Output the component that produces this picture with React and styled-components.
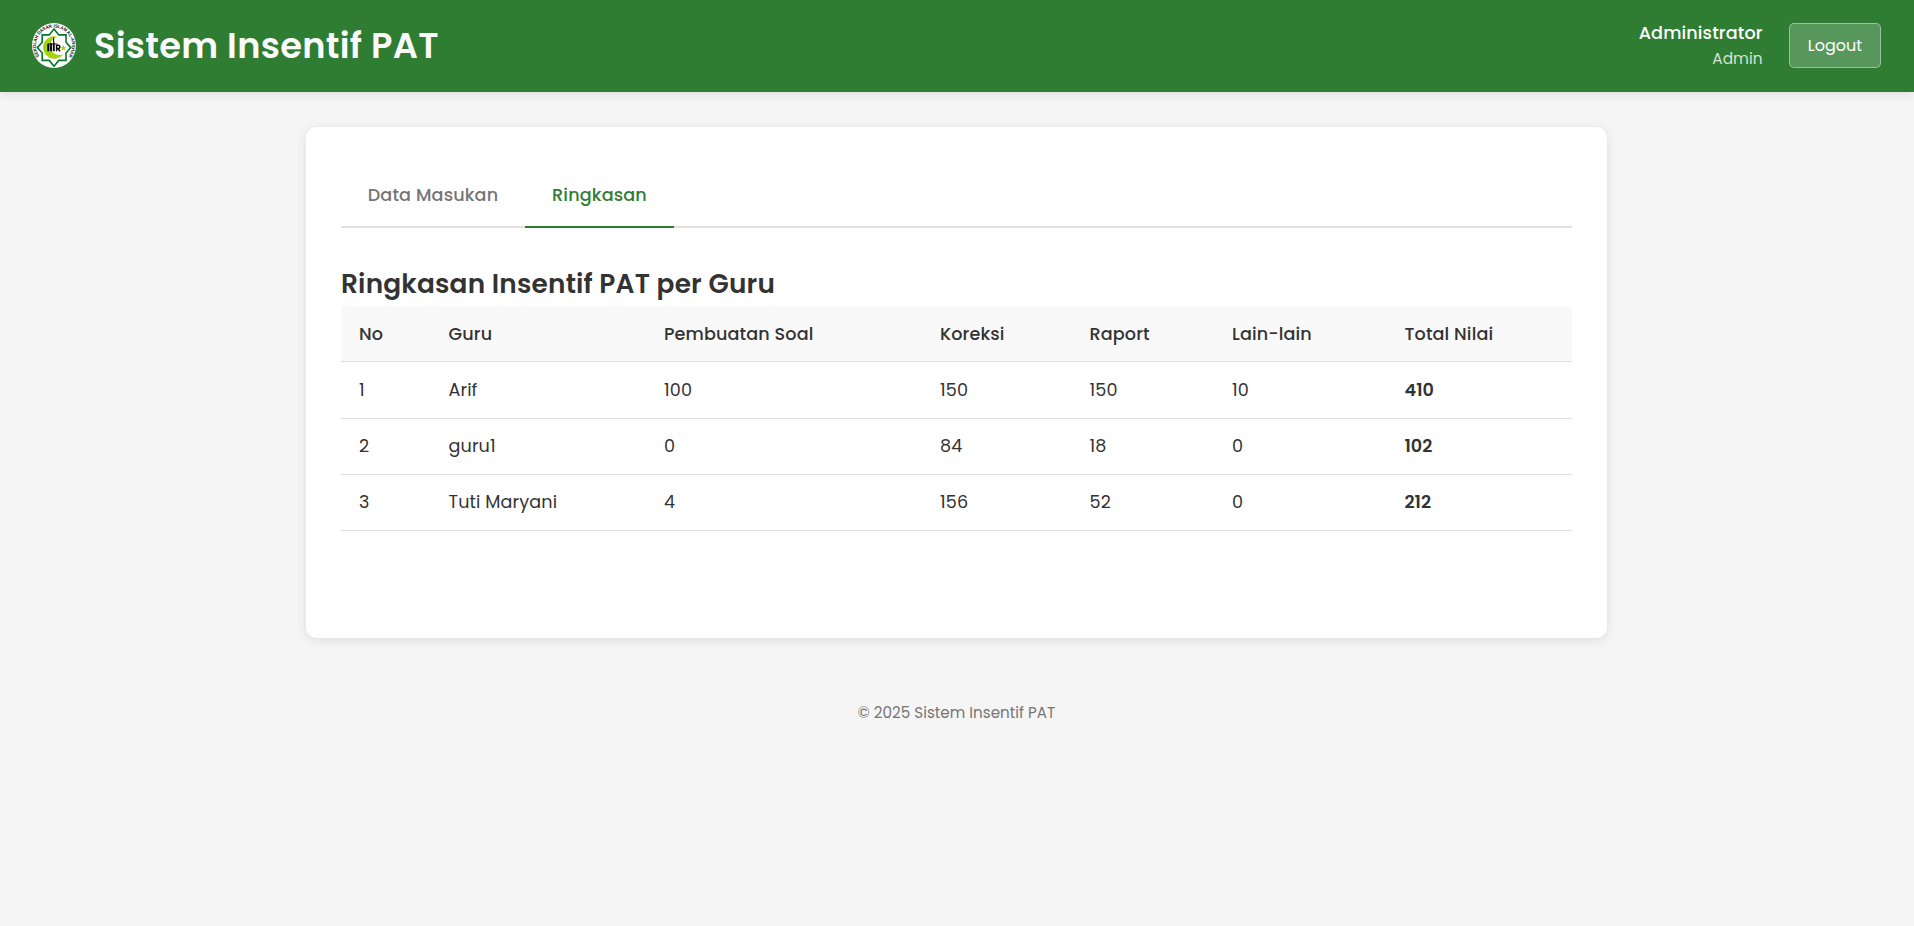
import React from 'react';
import styled, { createGlobalStyle } from 'styled-components';

const GlobalStyle = createGlobalStyle`
  *, *::before, *::after { box-sizing: border-box; }
  body {
    margin: 0;
    min-height: 100vh;
    background: #f5f5f5;
    color: #333;
    font-family: Poppins, Inter, "Liberation Sans", sans-serif;
    font-size: 17.6px;
    line-height: 28px;
    letter-spacing: 0.12px;
  }
`;

const Header = styled.header`
  display: flex;
  align-items: center;
  justify-content: space-between;
  height: 92px;
  padding: 0 33px 1px 32px;
  background: #2e7d32;
  color: #fff;
  box-shadow: 0 2px 9px rgba(0, 0, 0, 0.1);
`;

const Brand = styled.div`
  display: flex;
  align-items: center;
  gap: 18px;
`;

const Logo = styled.svg`
  display: block;
  width: 44px;
  height: 45px;
  overflow: visible;
`;

const Title = styled.h1`
  margin: 0;
  font-size: 35.2px;
  font-weight: 600;
  line-height: 47px;
  letter-spacing: 0.3px;
  color: #fafafa;
`;

const Account = styled.div`
  display: flex;
  align-items: center;
  gap: 26.4px;
`;

const Identity = styled.div`
  display: flex;
  flex-direction: column;
  align-items: flex-end;
`;

const UserName = styled.span`
  font-weight: 500;
  line-height: 28px;
`;

const Role = styled.span`
  font-size: 15.4px;
  line-height: 24px;
  letter-spacing: 0;
  padding-bottom: 1px;
  opacity: 0.8;
`;

const LogoutButton = styled.button`
  width: 92px;
  height: 45px;
  padding: 0;
  border: 1px solid rgba(255, 255, 255, 0.4);
  border-radius: 5px;
  background: rgba(255, 255, 255, 0.2);
  color: #fff;
  font: 400 16px Poppins, Inter, sans-serif;
`;

const Card = styled.main`
  width: 1301px;
  height: 511px;
  margin: 35px 0 0 306px;
  padding: 35px;
  border-radius: 11px;
  background: #fff;
  box-shadow: 0 2px 11px rgba(0, 0, 0, 0.1);
`;

const Tabs = styled.nav`
  display: flex;
  height: 66px;
  border-bottom: 2px solid #e0e0e0;
`;

const Tab = styled.button`
  width: ${({ $width }) => $width}px;
  height: 66px;
  padding: 1px 0 0;
  border: 0;
  border-bottom: 2px solid ${({ $active }) => ($active ? '#2e7d32' : 'transparent')};
  background: none;
  color: ${({ $active }) => ($active ? '#2e7d32' : '#757575')};
  font: 500 17.6px Poppins, Inter, sans-serif;
  letter-spacing: 0.14px;
`;

const SectionTitle = styled.h2`
  margin: 35px 0 0;
  height: 43px;
  font-size: 26.4px;
  font-weight: 600;
  line-height: 42px;
  letter-spacing: 0.19px;
`;

const Table = styled.table`
  width: 1231px;
  table-layout: fixed;
  border-collapse: separate;
  border-spacing: 0;
`;

const Column = styled.col`
  width: ${({ $width }) => $width}px;
`;

const HeadCell = styled.th`
  height: 56px;
  padding: 0 0 0 18px;
  border-bottom: 1px solid #e0e0e0;
  background: #f9f9f9;
  font-weight: 500;
  text-align: left;
`;

const Cell = styled.td`
  height: ${({ $tall }) => ($tall ? 57 : 56)}px;
  padding: 0 0 ${({ $tall }) => ($tall ? 0 : 1)}px 18px;
  border-bottom: 1px solid #e0e0e0;
  font-weight: ${({ $strong }) => ($strong ? 600 : 400)};
  letter-spacing: ${({ $strong }) => ($strong ? 0 : 0.12)}px;
`;

const Footer = styled.footer`
  margin-top: 63px;
  padding-right: 1px;
  font-size: 15.1px;
  line-height: 24px;
  letter-spacing: 0.03px;
  color: #757575;
  text-align: center;
`;

const columns = [
  { label: 'No', width: 89.5 },
  { label: 'Guru', width: 215.5 },
  { label: 'Pembuatan Soal', width: 276 },
  { label: 'Koreksi', width: 149.5 },
  { label: 'Raport', width: 142.5 },
  { label: 'Lain-lain', width: 172.5 },
  { label: 'Total Nilai', width: 185.5 },
];

const rows = [
  { guru: 'Arif', values: [100, 150, 150, 10], total: 410 },
  { guru: 'guru1', values: [0, 84, 18, 0], total: 102 },
  { guru: 'Tuti Maryani', values: [4, 156, 52, 0], total: 212 },
];

function SchoolLogo() {
  return (
    <Logo viewBox="0 0 44 45" aria-label="Sekolah Dasar Islam Al-Anshar">
      <defs>
        <path id="ring" d="M7.8 33.6 A18 18 0 1 1 36.2 33.6" />
      </defs>
      <ellipse cx="22" cy="22.5" rx="22" ry="22.5" fill="#fff" />
      <text
        fontFamily="Liberation Sans, sans-serif"
        fontWeight="700"
        fontSize="4.6"
        letterSpacing="0"
        fill="#111"
      >
        <textPath href="#ring" startOffset="0.5" textLength="79" lengthAdjust="spacingAndGlyphs">
          SEKOLAH DASAR ISLAM AL-ANSHAR
        </textPath>
      </text>
      <path
        d="M22 6 L26.8 11.9 L34 11.9 L34 19.2 L38.8 24.6 L34 30 L34 37.4 L26.8 37.4 L22 43.2 L17.2 37.4 L10.2 37.4 L10.2 30 L5.4 24.6 L10.2 19.2 L10.2 11.9 L17.2 11.9 Z"
        fill="#fff"
        stroke="#08752c"
        strokeWidth="1.6"
      />
      <path
        d="M26 13.8 A11.3 11.3 0 1 0 31.4 31.2 A9.2 9.2 0 1 1 26 13.8 Z"
        fill="#a4d30c"
      />
      <path d="M31.3 21.8l.9 2.1 2.2.1-1.7 1.5.6 2.3-2-1.3-1.9 1.3.6-2.3-1.7-1.5 2.2-.1z" fill="#a4d30c" />
      <g fill="none" stroke="#080808">
        <path d="M21.6 14.5v5" strokeWidth="1.1" />
        <path d="M16 21h9.5" strokeWidth="0.8" />
        <path d="M16.2 20.7v7.6M19 20v8.3M21.8 19.5v8.8" strokeWidth="1.9" />
        <path d="M24.6 28.3v-6h1.6a1.6 1.6 0 0 1 0 3.3h-1.6M26 25.6l2 2.7" strokeWidth="1.5" />
      </g>
    </Logo>
  );
}

export default function App() {
  return (
    <>
      <GlobalStyle />
      <Header>
        <Brand>
          <SchoolLogo />
          <Title>Sistem Insentif PAT</Title>
        </Brand>
        <Account>
          <Identity>
            <UserName>Administrator</UserName>
            <Role>Admin</Role>
          </Identity>
          <LogoutButton>Logout</LogoutButton>
        </Account>
      </Header>
      <Card>
        <Tabs>
          <Tab $width={184}>Data Masukan</Tab>
          <Tab $width={149} $active>Ringkasan</Tab>
        </Tabs>
        <SectionTitle>Ringkasan Insentif PAT per Guru</SectionTitle>
        <Table>
          <colgroup>
            {columns.map((c) => <Column key={c.label} $width={c.width} />)}
          </colgroup>
          <thead>
            <tr>
              {columns.map((c) => <HeadCell key={c.label}>{c.label}</HeadCell>)}
            </tr>
          </thead>
          <tbody>
            {rows.map((row, i) => (
              <tr key={row.guru}>
                <Cell $tall={i === 0}>{i + 1}</Cell>
                <Cell $tall={i === 0}>{row.guru}</Cell>
                {row.values.map((v, j) => (
                  <Cell key={j} $tall={i === 0}>{v}</Cell>
                ))}
                <Cell $tall={i === 0} $strong>{row.total}</Cell>
              </tr>
            ))}
          </tbody>
        </Table>
      </Card>
      <Footer>© 2025 Sistem Insentif PAT</Footer>
    </>
  );
}
